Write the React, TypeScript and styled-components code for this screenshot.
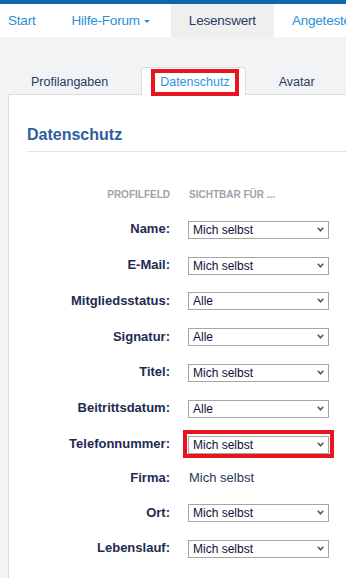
import React from 'react';
import styled, { createGlobalStyle } from 'styled-components';

/* Global =========================================================== */
const GlobalStyle = createGlobalStyle`
    html, body {
        margin: 0;
        padding: 0;
        background: #fff;
    }
    body {
        font-family: 'Liberation Sans', Arial, sans-serif;
    }
`;

/* Data =========================================================== */
type Field = {
    label: string;
    value: string;
    editable: boolean;
    marked?: boolean;
};

const FIELDS: Field[] = [
    { label: 'Name:', value: 'Mich selbst', editable: true },
    { label: 'E-Mail:', value: 'Mich selbst', editable: true },
    { label: 'Mitgliedsstatus:', value: 'Alle', editable: true },
    { label: 'Signatur:', value: 'Alle', editable: true },
    { label: 'Titel:', value: 'Mich selbst', editable: true },
    { label: 'Beitrittsdatum:', value: 'Alle', editable: true },
    { label: 'Telefonnummer:', value: 'Mich selbst', editable: true, marked: true },
    { label: 'Firma:', value: 'Mich selbst', editable: false },
    { label: 'Ort:', value: 'Mich selbst', editable: true },
    { label: 'Lebenslauf:', value: 'Mich selbst', editable: true },
];

/* Layout =========================================================== */
const Page = styled.div`
    width: 346px;
    min-height: 578px;
    overflow: hidden;
    background: #f2f3f5;
    display: flex;
    flex-direction: column;
`;

const TopBand = styled.div`
    height: 4px;
    background: #0d68a5;
`;

const Nav = styled.nav`
    display: flex;
    height: 33px;
    background: #fff;
    white-space: nowrap;
`;

const NavItem = styled.a<{ $current?: boolean; $first?: boolean }>`
    display: flex;
    align-items: center;
    padding: 0 18px 0 ${(p) => (p.$first ? '8px' : '18px')};
    font-size: 13.5px;
    letter-spacing: -0.2px;
    color: ${(p) => (p.$current ? '#253d63' : '#2a8fd6')};
    background: ${(p) => (p.$current ? '#efefef' : 'transparent')};
    text-decoration: none;
    flex-shrink: 0;
`;

const Caret = styled.span`
    display: inline-block;
    margin: 2px 3px 0 4px;
    border-left: 3px solid transparent;
    border-right: 3px solid transparent;
    border-top: 3px solid #2a8fd6;
`;

const Body = styled.div`
    flex: 1;
    display: flex;
    flex-direction: column;
    padding: 30px 0 0 8px;
`;

const TabList = styled.div`
    display: flex;
    align-items: flex-end;
    padding-left: 4px;
    position: relative;
    z-index: 1;
`;

const Tab = styled.div<{ $active?: boolean }>`
    box-sizing: border-box;
    height: 28px;
    margin: 0 14px -1px 0;
    padding: ${(p) => (p.$active ? '1px 6px 0 9px' : '0 18px')};
    display: flex;
    align-items: ${(p) => (p.$active ? 'flex-start' : 'center')};
    font-size: 12.5px;
    color: ${(p) => (p.$active ? '#2b93dc' : '#283a64')};
    background: ${(p) => (p.$active ? '#fff' : 'transparent')};
    border: 1px solid ${(p) => (p.$active ? '#dcdcdc' : 'transparent')};
    border-bottom: none;
    border-radius: 4px 4px 0 0;
`;

const Marked = styled.span`
    display: block;
    border: 4px solid #e8141f;
    padding: 3px 5px 3px 5px;
    line-height: 13px;
`;

const Panel = styled.section`
    flex: 1;
    background: #fff;
    border-top: 1px solid #dcdcdc;
    border-left: 1px solid #dcdcdc;
    padding: 0 0 20px 0;
`;

const Heading = styled.h2`
    margin: 30px 0 0 18px;
    padding-bottom: 6px;
    border-bottom: 1px solid #e2e2e2;
    font-size: 16px;
    line-height: 20px;
    font-weight: bold;
    color: #2e5e9c;
`;

const Form = styled.div`
    display: grid;
    grid-template-columns: 161px 141px;
    column-gap: 18px;
    row-gap: 17.8px;
    align-items: center;
    margin-top: 36px;
`;

const ColHead = styled.div<{ $right?: boolean }>`
    font-size: 10px;
    line-height: 14px;
    font-weight: bold;
    color: #9da3ab;
    text-align: ${(p) => (p.$right ? 'right' : 'left')};
    padding-left: ${(p) => (p.$right ? '0' : '1px')};
    white-space: nowrap;
`;

const Label = styled.label`
    text-align: right;
    font-size: 13px;
    font-weight: bold;
    color: #1e2a52;
    white-space: nowrap;
`;

const SelectWrap = styled.div<{ $marked?: boolean }>`
    position: relative;
    height: 18px;
    outline: ${(p) => (p.$marked ? '4px solid #e8141f' : 'none')};
    outline-offset: 1px;
`;

const Select = styled.select`
    appearance: none;
    -webkit-appearance: none;
    box-sizing: border-box;
    width: 141px;
    height: 18px;
    margin: 0;
    padding: 0 0 0 4px;
    border: 1px solid #a6a6a6;
    border-radius: 0;
    background: #fff;
    font-family: 'Liberation Sans', Arial, sans-serif;
    font-size: 12px;
    color: #10103a;
`;

const Chevron = styled.svg`
    position: absolute;
    right: 5px;
    top: 7px;
    pointer-events: none;
`;

const StaticValue = styled.div`
    font-size: 13px;
    line-height: 15px;
    color: #2a3660;
    padding-left: 1px;
`;

/* <App/> =========================================================== */
export default function App() {
    return (
        <>
            <GlobalStyle />
            <Page>
                <TopBand />
                <Nav>
                    <NavItem $first>Start</NavItem>
                    <NavItem>
                        Hilfe-Forum
                        <Caret />
                    </NavItem>
                    <NavItem $current>Lesenswert</NavItem>
                    <NavItem>Angetestet</NavItem>
                </Nav>
                <Body>
                    <TabList>
                        <Tab>Profilangaben</Tab>
                        <Tab $active>
                            <Marked>Datenschutz</Marked>
                        </Tab>
                        <Tab>Avatar</Tab>
                    </TabList>
                    <Panel>
                        <Heading>Datenschutz</Heading>
                        <Form>
                            <ColHead $right>PROFILFELD</ColHead>
                            <ColHead>SICHTBAR FÜR ...</ColHead>
                            {FIELDS.map((field) => (
                                <React.Fragment key={field.label}>
                                    <Label>{field.label}</Label>
                                    {field.editable ? (
                                        <SelectWrap $marked={field.marked}>
                                            <Select defaultValue={field.value}>
                                                <option>Alle</option>
                                                <option>Mitglieder</option>
                                                <option>Mich selbst</option>
                                            </Select>
                                            <Chevron width="7" height="5" viewBox="0 0 7 5">
                                                <path d="M0.8 0.8 L3.5 3.8 L6.2 0.8" fill="none" stroke="#555" strokeWidth="1.6" />
                                            </Chevron>
                                        </SelectWrap>
                                    ) : (
                                        <StaticValue>{field.value}</StaticValue>
                                    )}
                                </React.Fragment>
                            ))}
                        </Form>
                    </Panel>
                </Body>
            </Page>
        </>
    );
}
